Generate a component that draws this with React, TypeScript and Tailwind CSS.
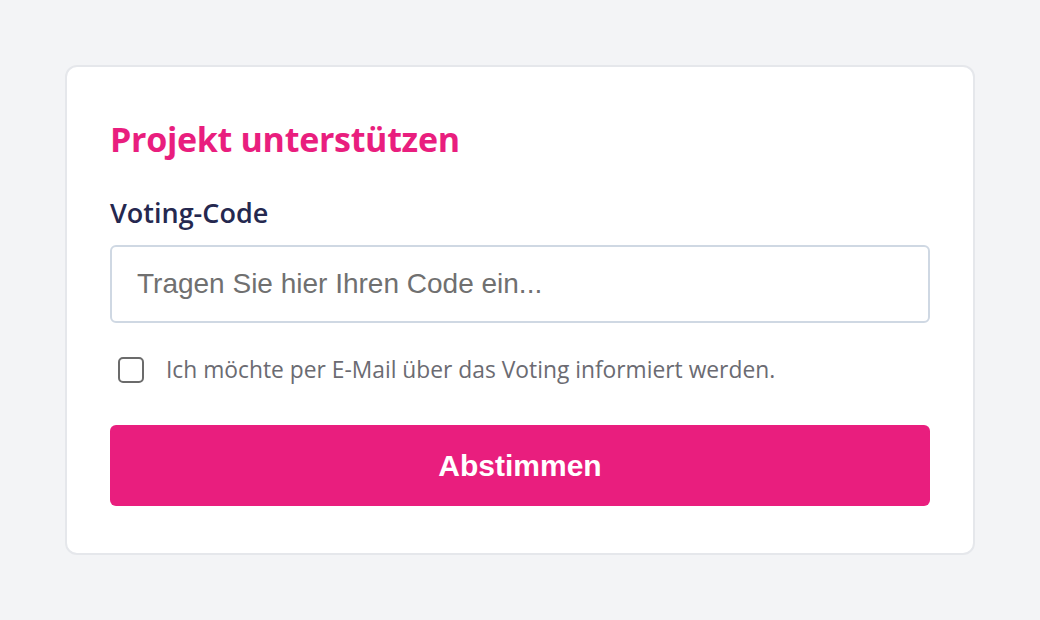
export default function App() {
  return (
    <div className="min-h-screen bg-[#f3f4f6] px-[65px] py-[65px]">
      <div className="rounded-[12px] border-2 border-[#e5e7eb] bg-white px-[43px] pb-[47px] pt-[49px]">
        <h1 className="font-['Open_Sans','Noto_Sans',sans-serif] text-[34px] font-bold leading-[46px] tracking-[-0.3px] text-[#e91e7e]">
          Projekt unterstützen
        </h1>
        <label
          htmlFor="code"
          className="mt-[33px] block font-['Open_Sans','Noto_Sans',sans-serif] text-[27px] font-semibold leading-[36px] text-[#25284f]"
        >
          Voting-Code
        </label>
        <input
          id="code"
          placeholder="Tragen Sie hier Ihren Code ein..."
          className="mt-[14px] block h-[78px] w-full rounded-[6px] border-2 border-[#cfd8e3] bg-white px-[25px] font-['Liberation_Sans',Arial,sans-serif] text-[28px] text-[#333] outline-none placeholder:text-[#707070]"
        />
        <label className="mt-[31px] flex h-[32px] items-center gap-[22px] pl-[8px]">
          <input
            type="checkbox"
            className="h-[26px] w-[26px] shrink-0 appearance-none rounded-[5px] border-2 border-[#6b6b6b] bg-white"
          />
          <span className="font-['Open_Sans','Noto_Sans',sans-serif] text-[22.8px] leading-[32px] text-[#6b6b72]">
            Ich möchte per E-Mail über das Voting informiert werden.
          </span>
        </label>
        <button className="mt-[39px] flex h-[81px] w-full items-center justify-center rounded-[6px] bg-[#e91e7e] font-['Liberation_Sans',Arial,sans-serif] text-[30px] font-bold text-white">
          Abstimmen
        </button>
      </div>
    </div>
  );
}
